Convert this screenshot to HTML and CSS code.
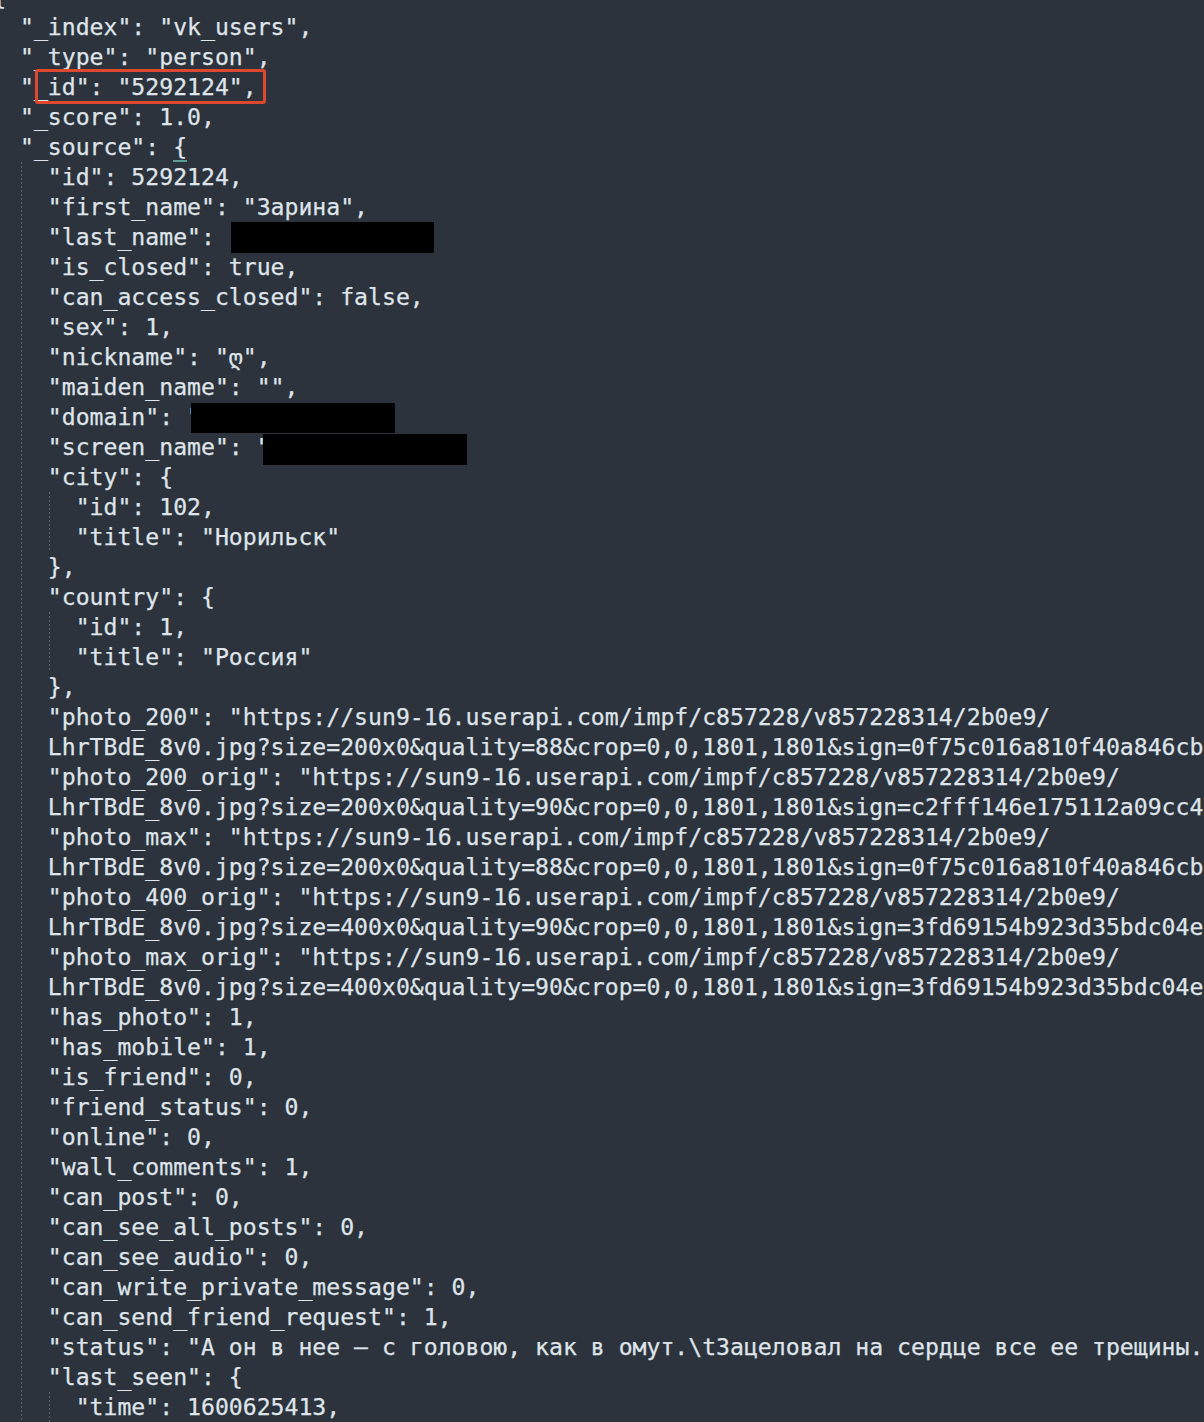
FILE: index.html
```html
<!DOCTYPE html>
<html lang="ru">
<head>
<meta charset="utf-8">
<title>vk_users</title>
<link rel="stylesheet" href="styles.css">
</head>
<body>
<div class="page">
<div class="code">
<div class="ln">{</div>
<div class="ln">  "_index": "vk_users",</div>
<div class="ln">  "_type": "person",</div>
<div class="ln">  "_id": "5292124",</div>
<div class="ln">  "_score": 1.0,</div>
<div class="ln">  "_source": <span class="match">{</span></div>
<div class="blk blk1">
<div class="ln">    "id": 5292124,</div>
<div class="ln">    "first_name": "Зарина",</div>
<div class="ln">    "last_name": </div>
<div class="ln">    "is_closed": true,</div>
<div class="ln">    "can_access_closed": false,</div>
<div class="ln">    "sex": 1,</div>
<div class="ln">    "nickname": "ღ",</div>
<div class="ln">    "maiden_name": "",</div>
<div class="ln">    "domain": "</div>
<div class="ln">    "screen_name": "</div>
<div class="ln">    "city": {</div>
<div class="blk blk2">
<div class="ln">      "id": 102,</div>
<div class="ln">      "title": "Норильск"</div>
</div>
<div class="ln">    },</div>
<div class="ln">    "country": {</div>
<div class="blk blk2">
<div class="ln">      "id": 1,</div>
<div class="ln">      "title": "Россия"</div>
</div>
<div class="ln">    },</div>
<div class="ln">    "photo_200": "https://sun9-16.userapi.com/impf/c857228/v857228314/2b0e9/</div>
<div class="ln">    LhrTBdE_8v0.jpg?size=200x0&amp;quality=88&amp;crop=0,0,1801,1801&amp;sign=0f75c016a810f40a846cb</div>
<div class="ln">    "photo_200_orig": "https://sun9-16.userapi.com/impf/c857228/v857228314/2b0e9/</div>
<div class="ln">    LhrTBdE_8v0.jpg?size=200x0&amp;quality=90&amp;crop=0,0,1801,1801&amp;sign=c2fff146e175112a09cc4</div>
<div class="ln">    "photo_max": "https://sun9-16.userapi.com/impf/c857228/v857228314/2b0e9/</div>
<div class="ln">    LhrTBdE_8v0.jpg?size=200x0&amp;quality=88&amp;crop=0,0,1801,1801&amp;sign=0f75c016a810f40a846cb</div>
<div class="ln">    "photo_400_orig": "https://sun9-16.userapi.com/impf/c857228/v857228314/2b0e9/</div>
<div class="ln">    LhrTBdE_8v0.jpg?size=400x0&amp;quality=90&amp;crop=0,0,1801,1801&amp;sign=3fd69154b923d35bdc04e</div>
<div class="ln">    "photo_max_orig": "https://sun9-16.userapi.com/impf/c857228/v857228314/2b0e9/</div>
<div class="ln">    LhrTBdE_8v0.jpg?size=400x0&amp;quality=90&amp;crop=0,0,1801,1801&amp;sign=3fd69154b923d35bdc04e</div>
<div class="ln">    "has_photo": 1,</div>
<div class="ln">    "has_mobile": 1,</div>
<div class="ln">    "is_friend": 0,</div>
<div class="ln">    "friend_status": 0,</div>
<div class="ln">    "online": 0,</div>
<div class="ln">    "wall_comments": 1,</div>
<div class="ln">    "can_post": 0,</div>
<div class="ln">    "can_see_all_posts": 0,</div>
<div class="ln">    "can_see_audio": 0,</div>
<div class="ln">    "can_write_private_message": 0,</div>
<div class="ln">    "can_send_friend_request": 1,</div>
<div class="ln">    "status": "А он в нее — с головою, как в омут.\tЗацеловал на сердце все ее трещины.</div>
<div class="ln">    "last_seen": {</div>
<div class="blk blk2">
<div class="ln">      "time": 1600625413,</div>
<div class="ln">      "platform": 4</div>
</div>
</div>
</div>
<div class="redact r-last"></div>
<div class="redact r-domain"></div>
<div class="redact r-screen"></div>
<div class="mark"></div>
</div>
</body>
</html>
```

FILE: styles.css
```css
* {
  margin: 0;
  padding: 0;
  box-sizing: border-box;
}

html,
body {
  background: #2c333c;
}

body {
  width: 1204px;
  height: 1422px;
  overflow: hidden;
}

.page {
  position: relative;
  width: 1204px;
  height: 1422px;
  overflow: hidden;
}

.code {
  margin: -18px 0 0 -7.86px;
  font-family: "DejaVu Sans Mono", monospace;
  font-size: 23.14px;
  line-height: 30px;
  color: #dfe4ea;
  -webkit-text-stroke: 0.25px #dfe4ea;
}

.ln {
  height: 30px;
  white-space: pre;
}

.blk {
  background-image: repeating-linear-gradient(to bottom, #5c646e 0 2px, transparent 2px 4px);
  background-repeat: no-repeat;
  background-size: 1px 100%;
}

.blk1 {
  background-position: 28.86px 0;
}

.blk2 {
  background-position: 56.86px 0;
}

.match {
  border-bottom: 2px solid #5b9e92;
}

.redact {
  position: absolute;
  background: #000;
}

.r-last {
  left: 231px;
  top: 222px;
  width: 203px;
  height: 31px;
}

.r-domain {
  left: 191px;
  top: 403px;
  width: 204px;
  height: 30px;
}

.r-screen {
  left: 263px;
  top: 434px;
  width: 204px;
  height: 31px;
}

.mark {
  position: absolute;
  left: 35px;
  top: 69px;
  width: 231px;
  height: 35px;
  border: 3px solid #e0472f;
  border-radius: 3px;
}
```
